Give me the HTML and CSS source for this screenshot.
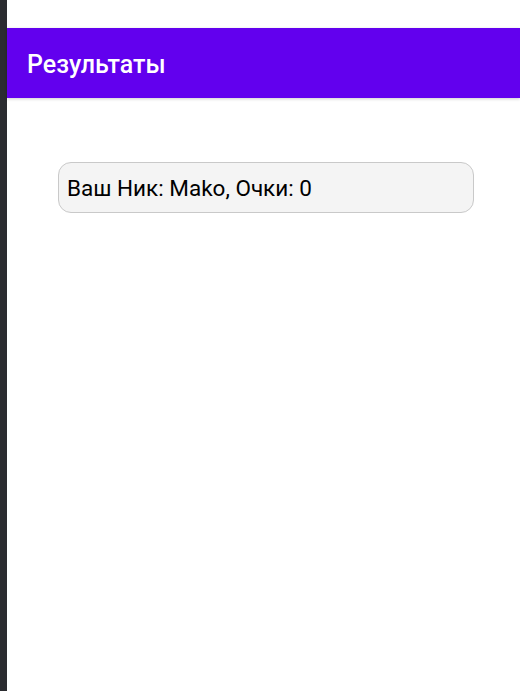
FILE: index.html
```html
<!DOCTYPE html>
<html lang="ru">
<head>
<meta charset="utf-8">
<link rel="stylesheet" href="styles.css">
</head>
<body>
<div class="frame">
  <div class="strip"></div>
  <div class="screen">
    <div class="status"></div>
    <header class="appbar"><h1 class="title">Результаты</h1></header>
    <div class="content">
      <div class="result">Ваш Ник: Mako, Очки: 0</div>
    </div>
  </div>
</div>
</body>
</html>
```
FILE: styles.css
```css
html, body { margin: 0; padding: 0; background: #fff; }
body { font-family: Roboto, "Noto Sans", sans-serif; }
.frame { display: flex; height: 691px; }
.strip { width: 7px; background: #2b2c30; flex: none; }
.screen { flex: 1; display: flex; flex-direction: column; }
.status { height: 28px; background: #fff; }
.appbar {
  box-sizing: border-box; height: 70px; background: #6200ee; display: flex; align-items: center;
  padding: 3px 0 0 20px; box-shadow: 0 1px 3px rgba(0,0,0,0.2);
  position: relative; z-index: 1;
}
.title { margin: 0; color: #fff; font-size: 25px; font-weight: 500; }
.content { padding: 64px 0 0 51px; }
.result {
  box-sizing: border-box; width: 416px; height: 51px;
  border: 1.5px solid #c9c9c9; border-radius: 13px; background: #f4f4f4;
  display: flex; align-items: center; padding-left: 8px;
  font-size: 22.5px; color: #000;
}
```
